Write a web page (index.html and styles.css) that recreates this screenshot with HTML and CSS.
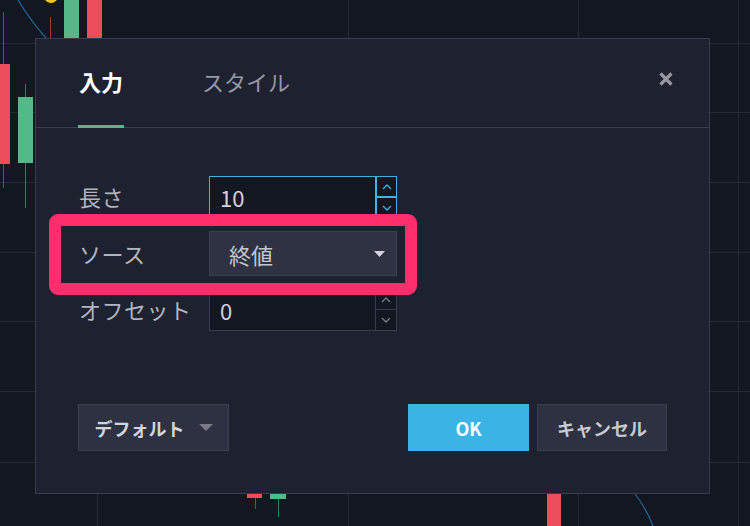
FILE: index.html
```html
<!DOCTYPE html>
<html lang="ja">
<head>
    <meta charset="UTF-8">
    <meta name="viewport" content="width=device-width, initial-scale=1.0">
    <title>インジケーター設定</title>
    <link rel="stylesheet" href="styles.css">
</head>
<body>
    <!-- chart behind the dialog -->
    <svg class="chart" width="750" height="526" viewBox="0 0 750 526">
        <g class="grid">
            <line x1="0" y1="43.5" x2="750" y2="43.5" />
            <line x1="0" y1="112.5" x2="750" y2="112.5" />
            <line x1="0" y1="182.5" x2="750" y2="182.5" />
            <line x1="0" y1="252.5" x2="750" y2="252.5" />
            <line x1="0" y1="321.5" x2="750" y2="321.5" />
            <line x1="0" y1="391.5" x2="750" y2="391.5" />
            <line x1="0" y1="462.5" x2="750" y2="462.5" />
            <line x1="97.5" y1="0" x2="97.5" y2="526" />
            <line x1="348.5" y1="0" x2="348.5" y2="526" />
            <line x1="578.5" y1="0" x2="578.5" y2="526" />
            <line x1="738.5" y1="0" x2="738.5" y2="526" />
        </g>
        <path class="ma" d="M18 0 Q30 20 46 38" />
        <path class="ma" d="M635 494 Q646 508 653 526" />
        <circle cx="51" cy="-4" r="7" fill="#f2c511" />
        <line class="wick-down" x1="50.5" y1="17" x2="50.5" y2="40" />
        <line class="wick-down" x1="3.5" y1="12" x2="3.5" y2="188" />
        <line class="wick-up" x1="25.5" y1="84" x2="25.5" y2="208" />
        <line class="wick-down" x1="255.5" y1="495" x2="255.5" y2="509" />
        <line class="wick-up" x1="278.5" y1="495" x2="278.5" y2="517" />
        <rect class="down" x="0" y="64" width="10" height="100" />
        <rect class="up" x="18" y="97" width="15" height="66" />
        <rect class="up" x="64" y="0" width="15" height="40" />
        <rect class="down" x="87" y="0" width="15" height="40" />
        <rect class="down" x="247" y="490" width="15" height="8" />
        <rect class="up" x="270" y="490" width="16" height="9" />
        <rect class="down" x="547" y="490" width="14" height="36" />
    </svg>

    <div class="dialog">
        <div class="dialog-head">
            <div class="tabs">
                <div class="tab active">入力</div>
                <div class="tab">スタイル</div>
            </div>
            <button class="close" aria-label="閉じる">
                <svg width="16" height="16" viewBox="0 0 16 16">
                    <path d="M2.5 2.5 L13.5 13.5 M13.5 2.5 L2.5 13.5" />
                </svg>
            </button>
        </div>

        <div class="dialog-body">
            <div class="row">
                <div class="label">長さ</div>
                <div class="number focused">
                    <div class="value">10</div>
                    <div class="spin">
                        <div class="spin-btn"><svg width="10" height="6" viewBox="0 0 10 6"><path d="M1 5 L5 1 L9 5" /></svg></div>
                        <div class="spin-btn"><svg width="10" height="6" viewBox="0 0 10 6"><path d="M1 1 L5 5 L9 1" /></svg></div>
                    </div>
                </div>
            </div>

            <div class="row">
                <div class="label">ソース</div>
                <div class="select">
                    <span>終値</span>
                    <svg width="11" height="6" viewBox="0 0 11 6"><path d="M0 0 H11 L5.5 6 Z" /></svg>
                </div>
            </div>

            <div class="row">
                <div class="label">オフセット</div>
                <div class="number">
                    <div class="value">0</div>
                    <div class="spin">
                        <div class="spin-btn"><svg width="10" height="6" viewBox="0 0 10 6"><path d="M1 5 L5 1 L9 5" /></svg></div>
                        <div class="spin-btn"><svg width="10" height="6" viewBox="0 0 10 6"><path d="M1 1 L5 5 L9 1" /></svg></div>
                    </div>
                </div>
            </div>
        </div>

        <div class="dialog-foot">
            <button class="btn btn-menu">デフォルト
                <svg width="14" height="7" viewBox="0 0 14 7"><path d="M0 0 H14 L7 7 Z" /></svg>
            </button>
            <div class="actions">
                <button class="btn btn-ok">OK</button>
                <button class="btn btn-cancel">キャンセル</button>
            </div>
        </div>

        <div class="highlight"></div>
    </div>
</body>
</html>
```

FILE: styles.css
```css
/* General */
* {
    box-sizing: border-box;
}

body {
    margin: 0;
    width: 750px;
    height: 526px;
    overflow: hidden;
    position: relative;
    background: #131722;
    font-family: "Noto Sans CJK JP", "Noto Sans", sans-serif;
    color: #b2b5be;
}

/* Chart */
.chart {
    display: block;
}

.grid line {
    stroke: #262a36;
    stroke-width: 1;
}

.ma {
    fill: none;
    stroke: #22699a;
    stroke-width: 1.2;
}

.up {
    fill: #53b987;
}

.down {
    fill: #eb4d5c;
}

.wick-up {
    stroke: #2b7d58;
    stroke-width: 1;
}

.wick-down {
    stroke: #a8323f;
    stroke-width: 1;
}

/* Dialog */
.dialog {
    position: absolute;
    left: 35px;
    top: 38px;
    width: 675px;
    height: 456px;
    background: #1e2130;
    border: 1px solid #383c4c;
    display: flex;
    flex-direction: column;
}

.dialog-head {
    height: 89px;
    border-bottom: 1px solid #383c4c;
    display: flex;
    align-items: stretch;
    justify-content: space-between;
    padding: 0 35px 0 42px;
}

.tabs {
    display: flex;
    gap: 77px;
}

.tab {
    display: flex;
    align-items: center;
    height: 89px;
    margin-bottom: -1px;
    padding: 0 1px 2px;
    font-size: 22px;
    color: #9598a1;
    border-bottom: 3px solid transparent;
}

.tab.active {
    color: #ffffff;
    font-weight: bold;
    border-bottom-color: #53b987;
}

.close {
    align-self: flex-start;
    margin-top: 32px;
    padding: 0;
    background: none;
    border: none;
    width: 16px;
    height: 16px;
}

.close svg {
    display: block;
}

.close path {
    stroke: #9598a1;
    stroke-width: 3.2;
    fill: none;
}

/* Form rows */
.dialog-body {
    flex: 1;
    padding: 48px 0 0 43px;
    display: flex;
    flex-direction: column;
    gap: 13px;
}

.row {
    display: flex;
    align-items: center;
}

.label {
    width: 130px;
    font-size: 22px;
    letter-spacing: 0.5px;
    color: #b2b5be;
    padding-bottom: 2px;
}

.number {
    display: flex;
    height: 42px;
}

.number .value {
    width: 167px;
    height: 42px;
    background: #131722;
    border: 1px solid #383c4c;
    padding: 0 10px;
    font-size: 22px;
    line-height: 40px;
    color: #d1d4dc;
}

.spin {
    display: flex;
    flex-direction: column;
}

.spin-btn {
    width: 21px;
    height: 21px;
    background: #131722;
    border: 1px solid #383c4c;
    border-left: none;
    display: flex;
    align-items: center;
    justify-content: center;
}

.spin-btn + .spin-btn {
    border-top: none;
}

.spin-btn svg path {
    fill: none;
    stroke: #787b86;
    stroke-width: 1.3;
}

.number.focused .value,
.number.focused .spin-btn {
    border-color: #3bb3e4;
}

.number.focused .spin-btn {
    border-left: 1px solid #3bb3e4;
}

.number.focused .spin-btn + .spin-btn {
    border-top: 1px solid #3bb3e4;
}

.number.focused .spin-btn svg path {
    stroke: #3bb3e4;
}

.select {
    width: 188px;
    height: 45px;
    background: #2f3242;
    border: 1px solid #3a3e4f;
    display: flex;
    align-items: center;
    justify-content: space-between;
    padding: 0 11px 0 19px;
    font-size: 22px;
    color: #c4c7cf;
}

.select svg path {
    fill: #d1d4dc;
}

/* Footer */
.dialog-foot {
    display: flex;
    justify-content: space-between;
    padding: 0 42px 42px 42px;
}

.actions {
    display: flex;
    gap: 8px;
}

.btn {
    flex-shrink: 0;
    height: 47px;
    padding: 0;
    background: #2e3141;
    border: 1px solid #3a3e4f;
    color: #c8cad1;
    font-family: inherit;
    font-size: 18px;
    font-weight: bold;
    white-space: nowrap;
    display: flex;
    align-items: center;
    justify-content: center;
}

.btn-menu {
    width: 151px;
    gap: 14px;
    color: #d1d4dc;
}

.btn-menu path {
    fill: #787b86;
}

.btn-ok {
    width: 121px;
    background: #3bb3e4;
    border-color: #3bb3e4;
    color: #ffffff;
}

.btn-cancel {
    width: 130px;
}

/* Pink highlight drawn over the source row */
.highlight {
    position: absolute;
    left: 13px;
    top: 175px;
    width: 368px;
    height: 81px;
    border: 12px solid #fe2d6b;
    border-radius: 9px;
}
```
